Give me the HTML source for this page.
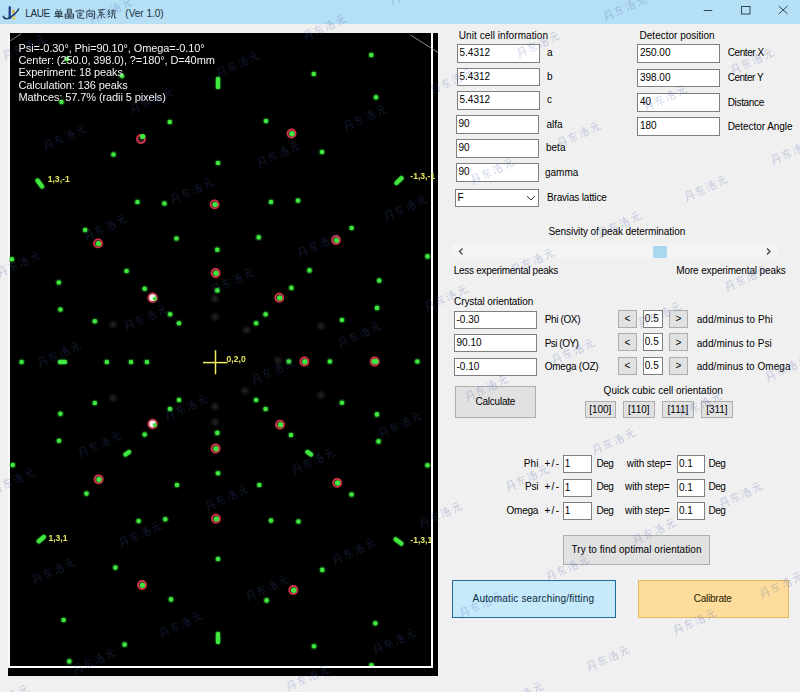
<!DOCTYPE html>
<html><head><meta charset="utf-8"><style>
html,body{margin:0;padding:0;width:800px;height:692px;overflow:hidden;background:#f0f0f0;position:relative;font-family:"Liberation Sans", sans-serif}
.t{position:absolute;white-space:nowrap;font-size:10px;line-height:12px;color:#111}
.tb{position:absolute;box-sizing:border-box;background:#fff;border:1px solid #7f7f7f}
.btn{position:absolute;box-sizing:border-box;background:#e1e1e1;border:1px solid #adadad}
</style></head><body>
<div style="position:absolute;left:0;top:0;width:800px;height:24px;background:#b5dff5"></div>
<svg style="position:absolute;left:0;top:0" width="24" height="24" viewBox="0 0 24 24">
<path d="M9.8 6.3 L9.6 19" stroke="#1c3c86" stroke-width="2.2" fill="none"/>
<path d="M3.3 15.8 C3.5 19.8 8.5 19.2 11.5 16.6 C14 14.6 17.5 12 18.8 8.4" stroke="#1a3a6a" stroke-width="1.6" fill="none"/>
<ellipse cx="13.3" cy="11.6" rx="1.3" ry="2.1" fill="#e0a838"/>
<circle cx="14" cy="17.9" r="1.6" fill="#e0cc50"/>
</svg>
<div class="t" style="left:25.3px;top:8.30px;font-size:10px;color:#22303c;letter-spacing:-0.4px">LAUE</div>
<svg style="position:absolute;left:0;top:0" width="200" height="24"><path transform="translate(54.2,9.2)" d="M2.5 0L3.5 1.5M6.5 0L5.5 1.5M1.5 2.5H7.5V6H1.5ZM1.5 4.25H7.5M4.5 2.5V9.2M0 7.3H9" fill="none" stroke="#2d3d4d" stroke-width="0.95"/><path transform="translate(64.85000000000001,9.2)" d="M2.5 0H6.5V3.8H2.5ZM2.5 1.9H6.5M0.3 4.8H4V9H0.3ZM0.3 6.9H4M5 4.8H8.7V9H5ZM5 6.9H8.7" fill="none" stroke="#2d3d4d" stroke-width="0.95"/><path transform="translate(75.5,9.2)" d="M4.5 0V1.2M0.7 3V1.6H8.3V3M2 3.9H7M4.5 3.9V8.2M4.5 6H7M2.2 5.2V8.6Q5 9.2 9 9.1" fill="none" stroke="#2d3d4d" stroke-width="0.95"/><path transform="translate(86.15,9.2)" d="M3.6 0L2.6 1.6M0.7 9.2V1.9H8.3V9.2L7.2 9M2.8 4.2H6.2V7.2H2.8Z" fill="none" stroke="#2d3d4d" stroke-width="0.95"/><path transform="translate(96.80000000000001,9.2)" d="M1 0.8L8 0.2M4.6 0.6L2.2 3.2L5.8 3.2L2 6L7.6 5.4M4.6 5.8V9.2M2.4 7.2L0.6 8.8M6.6 7.2L8.6 8.8" fill="none" stroke="#2d3d4d" stroke-width="0.95"/><path transform="translate(107.45,9.2)" d="M2 0L0.4 2.6H2.6L0.4 5.2L3 4.8M0.5 8L3.2 6.8M6 0V0.8M3.6 1.6H8.8M5.8 1.6L4.2 4.1L8.2 3.7M5.2 4.6L4 9.2M7 4.6V8.6H9" fill="none" stroke="#2d3d4d" stroke-width="0.95"/></svg>
<div class="t" style="left:125.3px;top:8.30px;font-size:10px;color:#22303c;">(Ver 1.0)</div>
<svg style="position:absolute;left:690px;top:0" width="110" height="24" stroke="#2c4a5a" stroke-width="1" fill="none">
<line x1="13.7" y1="10.5" x2="22.3" y2="10.5"/>
<rect x="51.5" y="6.5" width="8.5" height="7.5"/>
<line x1="88.7" y1="6" x2="97.6" y2="14"/><line x1="97.6" y1="6" x2="88.7" y2="14"/>
</svg>
<div style="position:absolute;left:8px;top:33.4px;width:430px;height:642.6px;background:#000"></div>
<div style="position:absolute;left:431px;top:33px;width:1.6px;height:635px;background:#fff"></div>
<div style="position:absolute;left:9px;top:666px;width:423.6px;height:2.2px;background:#fff"></div>
<div style="position:absolute;left:8px;top:33px;width:1.6px;height:635px;background:#f8f8f8"></div>
<svg style="position:absolute;left:0;top:0" width="440" height="680" viewBox="0 0 440 680"><clipPath id="cp"><rect x="9.6" y="33" width="421.4" height="633"/></clipPath><g clip-path="url(#cp)"><defs><filter id="bl" x="-50%" y="-50%" width="200%" height="200%"><feGaussianBlur stdDeviation="0.55"/></filter><filter id="bl2" x="-50%" y="-50%" width="200%" height="200%"><feGaussianBlur stdDeviation="1.6"/></filter></defs>
<g filter="url(#bl2)" fill="#222222">
<circle cx="215" cy="298.7" r="3.2"/>
<circle cx="215" cy="317" r="3.2"/>
<circle cx="246.6" cy="330" r="3.2"/>
<circle cx="278" cy="360.5" r="3.2"/>
<circle cx="245" cy="390.7" r="3.2"/>
<circle cx="215" cy="406.5" r="3.2"/>
<circle cx="215" cy="422" r="3.2"/>
<circle cx="113" cy="324.6" r="3.2"/>
<circle cx="113" cy="398" r="3.2"/>
<circle cx="321" cy="326" r="3.2"/>
<circle cx="321" cy="395" r="3.2"/>
</g>
<g filter="url(#bl)">
<circle cx="122" cy="76" r="3.6" fill="#20a020" opacity="0.35"/>
<circle cx="61.5" cy="102" r="3.6" fill="#20a020" opacity="0.35"/>
<circle cx="66.9" cy="59.1" r="3.6" fill="#20a020" opacity="0.35"/>
<circle cx="169.8" cy="122" r="3.6" fill="#20a020" opacity="0.35"/>
<circle cx="266" cy="121" r="3.6" fill="#20a020" opacity="0.35"/>
<circle cx="113.5" cy="154.5" r="3.6" fill="#20a020" opacity="0.35"/>
<circle cx="218" cy="163" r="3.6" fill="#20a020" opacity="0.35"/>
<circle cx="322" cy="152" r="3.6" fill="#20a020" opacity="0.35"/>
<circle cx="371.3" cy="55" r="3.6" fill="#20a020" opacity="0.35"/>
<circle cx="313.8" cy="74" r="3.6" fill="#20a020" opacity="0.35"/>
<circle cx="376" cy="97.3" r="3.6" fill="#20a020" opacity="0.35"/>
<circle cx="137.4" cy="202" r="3.6" fill="#20a020" opacity="0.35"/>
<circle cx="164.4" cy="203.5" r="3.6" fill="#20a020" opacity="0.35"/>
<circle cx="271" cy="202" r="3.6" fill="#20a020" opacity="0.35"/>
<circle cx="298" cy="200.6" r="3.6" fill="#20a020" opacity="0.35"/>
<circle cx="85.2" cy="230" r="3.6" fill="#20a020" opacity="0.35"/>
<circle cx="176.5" cy="238.5" r="3.6" fill="#20a020" opacity="0.35"/>
<circle cx="258.7" cy="237.4" r="3.6" fill="#20a020" opacity="0.35"/>
<circle cx="351.6" cy="228" r="3.6" fill="#20a020" opacity="0.35"/>
<circle cx="11.8" cy="259.3" r="3.6" fill="#20a020" opacity="0.35"/>
<circle cx="217.3" cy="249.7" r="3.6" fill="#20a020" opacity="0.35"/>
<circle cx="427.5" cy="256.4" r="3.6" fill="#20a020" opacity="0.35"/>
<circle cx="126.6" cy="271" r="3.6" fill="#20a020" opacity="0.35"/>
<circle cx="309.5" cy="270.4" r="3.6" fill="#20a020" opacity="0.35"/>
<circle cx="58.8" cy="282.5" r="3.6" fill="#20a020" opacity="0.35"/>
<circle cx="379.2" cy="280.6" r="3.6" fill="#20a020" opacity="0.35"/>
<circle cx="144.7" cy="288.8" r="3.6" fill="#20a020" opacity="0.35"/>
<circle cx="217.3" cy="290.4" r="3.6" fill="#20a020" opacity="0.35"/>
<circle cx="291.4" cy="287.9" r="3.6" fill="#20a020" opacity="0.35"/>
<circle cx="60.4" cy="309.5" r="3.6" fill="#20a020" opacity="0.35"/>
<circle cx="377" cy="307.9" r="3.6" fill="#20a020" opacity="0.35"/>
<circle cx="94.8" cy="321.3" r="3.6" fill="#20a020" opacity="0.35"/>
<circle cx="342" cy="320" r="3.6" fill="#20a020" opacity="0.35"/>
<circle cx="170.1" cy="314.3" r="3.6" fill="#20a020" opacity="0.35"/>
<circle cx="179" cy="323.2" r="3.6" fill="#20a020" opacity="0.35"/>
<circle cx="265.6" cy="314.3" r="3.6" fill="#20a020" opacity="0.35"/>
<circle cx="256.1" cy="323.2" r="3.6" fill="#20a020" opacity="0.35"/>
<circle cx="21.6" cy="362" r="3.6" fill="#20a020" opacity="0.35"/>
<circle cx="106.8" cy="362" r="3.6" fill="#20a020" opacity="0.35"/>
<circle cx="131" cy="362" r="3.6" fill="#20a020" opacity="0.35"/>
<circle cx="146.9" cy="362" r="3.6" fill="#20a020" opacity="0.35"/>
<circle cx="288.9" cy="361.5" r="3.6" fill="#20a020" opacity="0.35"/>
<circle cx="329.9" cy="361.5" r="3.6" fill="#20a020" opacity="0.35"/>
<circle cx="417.3" cy="361.5" r="3.6" fill="#20a020" opacity="0.35"/>
<circle cx="94.8" cy="403" r="3.6" fill="#20a020" opacity="0.35"/>
<circle cx="179" cy="400" r="3.6" fill="#20a020" opacity="0.35"/>
<circle cx="170" cy="409" r="3.6" fill="#20a020" opacity="0.35"/>
<circle cx="60.4" cy="413.8" r="3.6" fill="#20a020" opacity="0.35"/>
<circle cx="144.7" cy="434.5" r="3.6" fill="#20a020" opacity="0.35"/>
<circle cx="59" cy="440.8" r="3.6" fill="#20a020" opacity="0.35"/>
<circle cx="217.3" cy="432.9" r="3.6" fill="#20a020" opacity="0.35"/>
<circle cx="256.1" cy="400" r="3.6" fill="#20a020" opacity="0.35"/>
<circle cx="265.6" cy="409" r="3.6" fill="#20a020" opacity="0.35"/>
<circle cx="342" cy="402.7" r="3.6" fill="#20a020" opacity="0.35"/>
<circle cx="377" cy="414.4" r="3.6" fill="#20a020" opacity="0.35"/>
<circle cx="291" cy="435" r="3.6" fill="#20a020" opacity="0.35"/>
<circle cx="378.5" cy="441.4" r="3.6" fill="#20a020" opacity="0.35"/>
<circle cx="12.7" cy="465" r="3.6" fill="#20a020" opacity="0.35"/>
<circle cx="86.5" cy="493.6" r="3.6" fill="#20a020" opacity="0.35"/>
<circle cx="177" cy="485" r="3.6" fill="#20a020" opacity="0.35"/>
<circle cx="218" cy="473.2" r="3.6" fill="#20a020" opacity="0.35"/>
<circle cx="138.6" cy="521" r="3.6" fill="#20a020" opacity="0.35"/>
<circle cx="165.3" cy="519.3" r="3.6" fill="#20a020" opacity="0.35"/>
<circle cx="218" cy="559" r="3.6" fill="#20a020" opacity="0.35"/>
<circle cx="115.4" cy="567.6" r="3.6" fill="#20a020" opacity="0.35"/>
<circle cx="171" cy="599.4" r="3.6" fill="#20a020" opacity="0.35"/>
<circle cx="63.6" cy="620" r="3.6" fill="#20a020" opacity="0.35"/>
<circle cx="124.6" cy="644.6" r="3.6" fill="#20a020" opacity="0.35"/>
<circle cx="69.3" cy="661.4" r="3.6" fill="#20a020" opacity="0.35"/>
<circle cx="427.5" cy="465.3" r="3.6" fill="#20a020" opacity="0.35"/>
<circle cx="259.3" cy="485" r="3.6" fill="#20a020" opacity="0.35"/>
<circle cx="351.5" cy="494.5" r="3.6" fill="#20a020" opacity="0.35"/>
<circle cx="271" cy="520.6" r="3.6" fill="#20a020" opacity="0.35"/>
<circle cx="298.4" cy="521.5" r="3.6" fill="#20a020" opacity="0.35"/>
<circle cx="322.2" cy="569.9" r="3.6" fill="#20a020" opacity="0.35"/>
<circle cx="266.6" cy="600.4" r="3.6" fill="#20a020" opacity="0.35"/>
<circle cx="375.3" cy="623.3" r="3.6" fill="#20a020" opacity="0.35"/>
<circle cx="314" cy="646.2" r="3.6" fill="#20a020" opacity="0.35"/>
<circle cx="371.5" cy="665.3" r="3.6" fill="#20a020" opacity="0.35"/>
<circle cx="122" cy="76" r="2.3" fill="#40e840"/>
<circle cx="61.5" cy="102" r="2.3" fill="#40e840"/>
<circle cx="66.9" cy="59.1" r="2.3" fill="#40e840"/>
<circle cx="169.8" cy="122" r="2.3" fill="#40e840"/>
<circle cx="266" cy="121" r="2.3" fill="#40e840"/>
<circle cx="141" cy="139" r="5.2" fill="#c02838" opacity="0.3"/>
<circle cx="141" cy="139" r="4.0" fill="#302020" stroke="#d03448" stroke-width="1.8"/>
<circle cx="142.7" cy="136.4" r="2.7" fill="#40e840"/>
<circle cx="291.5" cy="133.5" r="5.2" fill="#c02838" opacity="0.3"/>
<circle cx="291.5" cy="133.5" r="4.0" fill="#302020" stroke="#d03448" stroke-width="1.8"/>
<circle cx="291.9" cy="133.7" r="2.7" fill="#40e840"/>
<circle cx="113.5" cy="154.5" r="2.3" fill="#40e840"/>
<circle cx="218" cy="163" r="2.3" fill="#40e840"/>
<circle cx="322" cy="152" r="2.3" fill="#40e840"/>
<circle cx="371.3" cy="55" r="2.3" fill="#40e840"/>
<circle cx="313.8" cy="74" r="2.3" fill="#40e840"/>
<circle cx="376" cy="97.3" r="2.3" fill="#40e840"/>
<circle cx="137.4" cy="202" r="2.3" fill="#40e840"/>
<circle cx="164.4" cy="203.5" r="2.3" fill="#40e840"/>
<circle cx="214.6" cy="204.4" r="5.2" fill="#c02838" opacity="0.3"/>
<circle cx="214.6" cy="204.4" r="4.0" fill="#302020" stroke="#d03448" stroke-width="1.8"/>
<circle cx="215.0" cy="204.6" r="2.7" fill="#40e840"/>
<circle cx="271" cy="202" r="2.3" fill="#40e840"/>
<circle cx="298" cy="200.6" r="2.3" fill="#40e840"/>
<circle cx="85.2" cy="230" r="2.3" fill="#40e840"/>
<circle cx="176.5" cy="238.5" r="2.3" fill="#40e840"/>
<circle cx="258.7" cy="237.4" r="2.3" fill="#40e840"/>
<circle cx="351.6" cy="228" r="2.3" fill="#40e840"/>
<circle cx="98" cy="243.4" r="5.2" fill="#c02838" opacity="0.3"/>
<circle cx="98" cy="243.4" r="4.0" fill="#302020" stroke="#d03448" stroke-width="1.8"/>
<circle cx="98.4" cy="243.6" r="2.7" fill="#40e840"/>
<circle cx="336" cy="240" r="5.2" fill="#c02838" opacity="0.3"/>
<circle cx="336" cy="240" r="4.0" fill="#302020" stroke="#d03448" stroke-width="1.8"/>
<circle cx="336.4" cy="240.2" r="2.7" fill="#40e840"/>
<circle cx="11.8" cy="259.3" r="2.3" fill="#40e840"/>
<circle cx="217.3" cy="249.7" r="2.3" fill="#40e840"/>
<circle cx="427.5" cy="256.4" r="2.3" fill="#40e840"/>
<circle cx="126.6" cy="271" r="2.3" fill="#40e840"/>
<circle cx="309.5" cy="270.4" r="2.3" fill="#40e840"/>
<circle cx="215.6" cy="273" r="5.2" fill="#c02838" opacity="0.3"/>
<circle cx="215.6" cy="273" r="4.0" fill="#302020" stroke="#d03448" stroke-width="1.8"/>
<circle cx="216.0" cy="273.2" r="2.7" fill="#40e840"/>
<circle cx="58.8" cy="282.5" r="2.3" fill="#40e840"/>
<circle cx="379.2" cy="280.6" r="2.3" fill="#40e840"/>
<circle cx="144.7" cy="288.8" r="2.3" fill="#40e840"/>
<circle cx="152.6" cy="297.7" r="5.4" fill="#b03040"/>
<circle cx="152.6" cy="297.7" r="3.4" fill="#fff0f0"/>
<circle cx="154.79999999999998" cy="298.7" r="2.1" fill="#40e040"/>
<circle cx="217.3" cy="290.4" r="2.3" fill="#40e840"/>
<circle cx="291.4" cy="287.9" r="2.3" fill="#40e840"/>
<circle cx="279.3" cy="297.7" r="5.2" fill="#c02838" opacity="0.3"/>
<circle cx="279.3" cy="297.7" r="4.0" fill="#302020" stroke="#d03448" stroke-width="1.8"/>
<circle cx="279.7" cy="297.9" r="2.7" fill="#40e840"/>
<circle cx="60.4" cy="309.5" r="2.3" fill="#40e840"/>
<circle cx="377" cy="307.9" r="2.3" fill="#40e840"/>
<circle cx="94.8" cy="321.3" r="2.3" fill="#40e840"/>
<circle cx="342" cy="320" r="2.3" fill="#40e840"/>
<circle cx="170.1" cy="314.3" r="2.3" fill="#40e840"/>
<circle cx="179" cy="323.2" r="2.3" fill="#40e840"/>
<circle cx="265.6" cy="314.3" r="2.3" fill="#40e840"/>
<circle cx="256.1" cy="323.2" r="2.3" fill="#40e840"/>
<circle cx="21.6" cy="362" r="2.3" fill="#40e840"/>
<circle cx="106.8" cy="362" r="2.3" fill="#40e840"/>
<circle cx="131" cy="362" r="2.3" fill="#40e840"/>
<circle cx="146.9" cy="362" r="2.3" fill="#40e840"/>
<circle cx="288.9" cy="361.5" r="2.3" fill="#40e840"/>
<circle cx="304.4" cy="361.5" r="5.2" fill="#c02838" opacity="0.3"/>
<circle cx="304.4" cy="361.5" r="4.0" fill="#302020" stroke="#d03448" stroke-width="1.8"/>
<circle cx="304.79999999999995" cy="361.7" r="2.7" fill="#40e840"/>
<circle cx="329.9" cy="361.5" r="2.3" fill="#40e840"/>
<circle cx="374.7" cy="361.5" r="5.2" fill="#c02838" opacity="0.3"/>
<circle cx="374.7" cy="361.5" r="4.0" fill="#302020" stroke="#d03448" stroke-width="1.8"/>
<ellipse cx="375.09999999999997" cy="361.5" rx="3.6" ry="2.7" fill="#40e840"/>
<circle cx="417.3" cy="361.5" r="2.3" fill="#40e840"/>
<circle cx="94.8" cy="403" r="2.3" fill="#40e840"/>
<circle cx="179" cy="400" r="2.3" fill="#40e840"/>
<circle cx="170" cy="409" r="2.3" fill="#40e840"/>
<circle cx="60.4" cy="413.8" r="2.3" fill="#40e840"/>
<circle cx="152.6" cy="424" r="5.4" fill="#b03040"/>
<circle cx="152.6" cy="424" r="3.4" fill="#fff0f0"/>
<circle cx="154.79999999999998" cy="425" r="2.1" fill="#40e040"/>
<circle cx="144.7" cy="434.5" r="2.3" fill="#40e840"/>
<circle cx="59" cy="440.8" r="2.3" fill="#40e840"/>
<circle cx="217.3" cy="432.9" r="2.3" fill="#40e840"/>
<circle cx="215.6" cy="448.5" r="5.2" fill="#c02838" opacity="0.3"/>
<circle cx="215.6" cy="448.5" r="4.0" fill="#302020" stroke="#d03448" stroke-width="1.8"/>
<circle cx="216.0" cy="448.7" r="2.7" fill="#40e840"/>
<circle cx="256.1" cy="400" r="2.3" fill="#40e840"/>
<circle cx="265.6" cy="409" r="2.3" fill="#40e840"/>
<circle cx="342" cy="402.7" r="2.3" fill="#40e840"/>
<circle cx="280" cy="424.6" r="5.2" fill="#c02838" opacity="0.3"/>
<circle cx="280" cy="424.6" r="4.0" fill="#302020" stroke="#d03448" stroke-width="1.8"/>
<circle cx="280.4" cy="424.8" r="2.7" fill="#40e840"/>
<circle cx="377" cy="414.4" r="2.3" fill="#40e840"/>
<circle cx="291" cy="435" r="2.3" fill="#40e840"/>
<circle cx="378.5" cy="441.4" r="2.3" fill="#40e840"/>
<circle cx="12.7" cy="465" r="2.3" fill="#40e840"/>
<circle cx="98.6" cy="479.3" r="5.2" fill="#c02838" opacity="0.3"/>
<circle cx="98.6" cy="479.3" r="4.0" fill="#302020" stroke="#d03448" stroke-width="1.8"/>
<circle cx="99.0" cy="479.5" r="2.7" fill="#40e840"/>
<circle cx="86.5" cy="493.6" r="2.3" fill="#40e840"/>
<circle cx="177" cy="485" r="2.3" fill="#40e840"/>
<circle cx="218" cy="473.2" r="2.3" fill="#40e840"/>
<circle cx="138.6" cy="521" r="2.3" fill="#40e840"/>
<circle cx="165.3" cy="519.3" r="2.3" fill="#40e840"/>
<circle cx="216" cy="518.7" r="5.2" fill="#c02838" opacity="0.3"/>
<circle cx="216" cy="518.7" r="4.0" fill="#302020" stroke="#d03448" stroke-width="1.8"/>
<circle cx="216.4" cy="518.9000000000001" r="2.7" fill="#40e840"/>
<circle cx="218" cy="559" r="2.3" fill="#40e840"/>
<circle cx="115.4" cy="567.6" r="2.3" fill="#40e840"/>
<circle cx="142" cy="585" r="5.2" fill="#c02838" opacity="0.3"/>
<circle cx="142" cy="585" r="4.0" fill="#302020" stroke="#d03448" stroke-width="1.8"/>
<circle cx="142.4" cy="585.2" r="2.7" fill="#40e840"/>
<circle cx="171" cy="599.4" r="2.3" fill="#40e840"/>
<circle cx="63.6" cy="620" r="2.3" fill="#40e840"/>
<circle cx="124.6" cy="644.6" r="2.3" fill="#40e840"/>
<circle cx="69.3" cy="661.4" r="2.3" fill="#40e840"/>
<circle cx="427.5" cy="465.3" r="2.3" fill="#40e840"/>
<circle cx="259.3" cy="485" r="2.3" fill="#40e840"/>
<circle cx="337.2" cy="482.8" r="5.2" fill="#c02838" opacity="0.3"/>
<circle cx="337.2" cy="482.8" r="4.0" fill="#302020" stroke="#d03448" stroke-width="1.8"/>
<circle cx="337.59999999999997" cy="483.0" r="2.7" fill="#40e840"/>
<circle cx="351.5" cy="494.5" r="2.3" fill="#40e840"/>
<circle cx="271" cy="520.6" r="2.3" fill="#40e840"/>
<circle cx="298.4" cy="521.5" r="2.3" fill="#40e840"/>
<circle cx="322.2" cy="569.9" r="2.3" fill="#40e840"/>
<circle cx="293.3" cy="590" r="5.2" fill="#c02838" opacity="0.3"/>
<circle cx="293.3" cy="590" r="4.0" fill="#302020" stroke="#d03448" stroke-width="1.8"/>
<circle cx="293.7" cy="590.2" r="2.7" fill="#40e840"/>
<circle cx="266.6" cy="600.4" r="2.3" fill="#40e840"/>
<circle cx="375.3" cy="623.3" r="2.3" fill="#40e840"/>
<circle cx="314" cy="646.2" r="2.3" fill="#40e840"/>
<circle cx="371.5" cy="665.3" r="2.3" fill="#40e840"/>
<line x1="218" y1="79" x2="218" y2="87" stroke="#20a020" stroke-opacity="0.35" stroke-width="6.5" stroke-linecap="round"/>
<line x1="218" y1="79" x2="218" y2="87" stroke="#40e840" stroke-width="4.4" stroke-linecap="round"/>
<line x1="218" y1="634" x2="218" y2="642" stroke="#20a020" stroke-opacity="0.35" stroke-width="6.5" stroke-linecap="round"/>
<line x1="218" y1="634" x2="218" y2="642" stroke="#40e840" stroke-width="4.4" stroke-linecap="round"/>
<line x1="37.6" y1="180.6" x2="42" y2="186.5" stroke="#20a020" stroke-opacity="0.35" stroke-width="6.5" stroke-linecap="round"/>
<line x1="37.6" y1="180.6" x2="42" y2="186.5" stroke="#40e840" stroke-width="4.4" stroke-linecap="round"/>
<line x1="396.5" y1="183" x2="401.5" y2="178.2" stroke="#20a020" stroke-opacity="0.35" stroke-width="6.5" stroke-linecap="round"/>
<line x1="396.5" y1="183" x2="401.5" y2="178.2" stroke="#40e840" stroke-width="4.4" stroke-linecap="round"/>
<line x1="43.8" y1="537" x2="38.8" y2="541.2" stroke="#20a020" stroke-opacity="0.35" stroke-width="6.5" stroke-linecap="round"/>
<line x1="43.8" y1="537" x2="38.8" y2="541.2" stroke="#40e840" stroke-width="4.4" stroke-linecap="round"/>
<line x1="395.8" y1="539.4" x2="401.3" y2="543.6" stroke="#20a020" stroke-opacity="0.35" stroke-width="6.5" stroke-linecap="round"/>
<line x1="395.8" y1="539.4" x2="401.3" y2="543.6" stroke="#40e840" stroke-width="4.4" stroke-linecap="round"/>
<line x1="60" y1="362" x2="65" y2="362" stroke="#20a020" stroke-opacity="0.35" stroke-width="6.5" stroke-linecap="round"/>
<line x1="60" y1="362" x2="65" y2="362" stroke="#40e840" stroke-width="4.4" stroke-linecap="round"/>
<line x1="125.5" y1="454.5" x2="129" y2="452" stroke="#20a020" stroke-opacity="0.35" stroke-width="6.5" stroke-linecap="round"/>
<line x1="125.5" y1="454.5" x2="129" y2="452" stroke="#40e840" stroke-width="4.4" stroke-linecap="round"/>
<line x1="307.5" y1="452" x2="311" y2="454.5" stroke="#20a020" stroke-opacity="0.35" stroke-width="6.5" stroke-linecap="round"/>
<line x1="307.5" y1="452" x2="311" y2="454.5" stroke="#40e840" stroke-width="4.4" stroke-linecap="round"/>
</g>
<g stroke="#eeee60" stroke-width="1.5"><line x1="203" y1="362.6" x2="227.5" y2="362.6"/><line x1="215.5" y1="350.2" x2="215.5" y2="374.3"/></g>
<text x="226.6" y="362" fill="#e6e660" font-family="Liberation Sans" font-weight="bold" font-size="8.6">0,2,0</text>
<text x="47.7" y="181.9" fill="#e6e660" font-family="Liberation Sans" font-weight="bold" font-size="8.6">1,3,-1</text>
<text x="48.4" y="541.2" fill="#e6e660" font-family="Liberation Sans" font-weight="bold" font-size="8.6">1,3,1</text>
<text x="410.3" y="542.6" fill="#e6e660" font-family="Liberation Sans" font-weight="bold" font-size="8.6">-1,3,1</text></g><line x1="9.8" y1="41" x2="21" y2="34" stroke="#9a9a9a" stroke-width="0.8"/><line x1="410.5" y1="35" x2="438" y2="52.5" stroke="#b0b0b0" stroke-width="0.8"/><text x="410.3" y="178.9" fill="#e6e660" font-family="Liberation Sans" font-weight="bold" font-size="8.6">-1,3,-1</text></svg>
<div class="t" style="left:18.5px;top:41.67px;font-size:11px;color:#f4f4f4;letter-spacing:-0.1px">Psi=-0.30°, Phi=90.10°, Omega=-0.10°</div>
<div class="t" style="left:18.5px;top:54.02px;font-size:11px;color:#f4f4f4;letter-spacing:-0.1px">Center: (250.0, 398.0), ?=180°, D=40mm</div>
<div class="t" style="left:18.5px;top:66.37px;font-size:11px;color:#f4f4f4;letter-spacing:-0.1px">Experiment: 18 peaks</div>
<div class="t" style="left:18.5px;top:78.72px;font-size:11px;color:#f4f4f4;letter-spacing:-0.1px">Calculation: 136 peaks</div>
<div class="t" style="left:18.5px;top:91.07px;font-size:11px;color:#f4f4f4;letter-spacing:-0.1px">Mathces: 57.7% (radii 5 pixels)</div>
<div class="t" style="left:458.8px;top:29.50px;font-size:10px;color:#000;letter-spacing:0.069px;">Unit cell information</div>
<div class="t" style="left:639.6px;top:29.50px;font-size:10px;color:#000;letter-spacing:-0.003px;">Detector position</div>
<div class="tb" style="left:457px;top:44px;width:82.5px;height:18.5px"></div><div class="t" style="left:459.5px;top:47.00px;font-size:10px;color:#000;">5.4312</div>
<div class="t" style="left:547px;top:47.20px;font-size:10px;color:#000;">a</div>
<div class="tb" style="left:457px;top:67.5px;width:82.5px;height:18.5px"></div><div class="t" style="left:459.5px;top:70.50px;font-size:10px;color:#000;">5.4312</div>
<div class="t" style="left:547px;top:70.70px;font-size:10px;color:#000;">b</div>
<div class="tb" style="left:457px;top:91px;width:82.5px;height:18.5px"></div><div class="t" style="left:459.5px;top:94.00px;font-size:10px;color:#000;">5.4312</div>
<div class="t" style="left:547px;top:94.20px;font-size:10px;color:#000;">c</div>
<div class="tb" style="left:456px;top:115.3px;width:82.5px;height:18.5px"></div><div class="t" style="left:458.5px;top:118.30px;font-size:10px;color:#000;">90</div>
<div class="t" style="left:546.4px;top:118.50px;font-size:10px;color:#000;">alfa</div>
<div class="tb" style="left:456px;top:139.2px;width:82.5px;height:18.5px"></div><div class="t" style="left:458.5px;top:142.20px;font-size:10px;color:#000;">90</div>
<div class="t" style="left:546px;top:142.40px;font-size:10px;color:#000;">beta</div>
<div class="tb" style="left:456px;top:163.3px;width:82.5px;height:18.5px"></div><div class="t" style="left:458.5px;top:166.30px;font-size:10px;color:#000;">90</div>
<div class="t" style="left:545px;top:166.50px;font-size:10px;color:#000;">gamma</div>
<div class="tb" style="left:454.5px;top:188.5px;width:84px;height:18.5px"></div><div class="t" style="left:457.5px;top:191.50px;font-size:10px;color:#000;">F</div>
<svg style="position:absolute;left:525.5px;top:194px" width="10" height="8"><polyline points="1,2 5,6 9,2" fill="none" stroke="#333" stroke-width="1"/></svg>
<div class="t" style="left:547px;top:191.70px;font-size:10px;color:#000;letter-spacing:-0.175px;">Bravias lattice</div>
<div class="tb" style="left:637.4px;top:44.1px;width:82.3px;height:18.7px"></div><div class="t" style="left:639.9px;top:47.10px;font-size:10px;color:#000;">250.00</div>
<div class="t" style="left:727.7px;top:47.40px;font-size:10px;color:#000;letter-spacing:-0.410px;">Center X</div>
<div class="tb" style="left:637.4px;top:68.6px;width:82.3px;height:18.7px"></div><div class="t" style="left:639.9px;top:71.60px;font-size:10px;color:#000;">398.00</div>
<div class="t" style="left:727.7px;top:71.90px;font-size:10px;color:#000;letter-spacing:-0.471px;">Center Y</div>
<div class="tb" style="left:637.4px;top:93.4px;width:82.3px;height:18.7px"></div><div class="t" style="left:639.9px;top:96.40px;font-size:10px;color:#000;">40</div>
<div class="t" style="left:727.7px;top:96.70px;font-size:10px;color:#000;letter-spacing:-0.329px;">Distance</div>
<div class="tb" style="left:637.4px;top:117.4px;width:82.3px;height:18.7px"></div><div class="t" style="left:639.9px;top:120.40px;font-size:10px;color:#000;">180</div>
<div class="t" style="left:727.7px;top:120.70px;font-size:10px;color:#000;letter-spacing:-0.055px;">Detector Angle</div>
<div class="t" style="left:548.5px;top:225.50px;font-size:10px;color:#000;letter-spacing:-0.074px;">Sensivity of peak determination</div>
<div style="position:absolute;left:452px;top:244.3px;width:326px;height:13.5px;background:#f4f4f4"></div>
<div style="position:absolute;left:653px;top:246px;width:13.8px;height:11.75px;background:#a8d8f0"></div>
<svg style="position:absolute;left:452px;top:244px" width="326" height="14"><polyline points="10.5,4.5 7.5,7.5 10.5,10.5" fill="none" stroke="#444" stroke-width="1.3"/><polyline points="315,4.5 318,7.5 315,10.5" fill="none" stroke="#444" stroke-width="1.3"/></svg>
<div class="t" style="left:453.7px;top:265.10px;font-size:10px;color:#000;letter-spacing:-0.278px;">Less experimental peaks</div>
<div class="t" style="left:676.25px;top:264.90px;font-size:10px;color:#000;letter-spacing:-0.126px;">More experimental peaks</div>
<div class="t" style="left:454px;top:296.20px;font-size:10px;color:#000;letter-spacing:-0.077px;">Crystal orientation</div>
<div class="tb" style="left:454px;top:311.25px;width:82.8px;height:18px"></div><div class="t" style="left:456.5px;top:314.25px;font-size:10px;color:#000;">-0.30</div>
<div class="t" style="left:544.7px;top:314.45px;font-size:10px;color:#000;letter-spacing:-0.363px;">Phi (OX)</div>
<div class="btn" style="left:618.3px;top:310px;width:18.3px;height:18px"></div><div class="t" style="left:477.44999999999993px;width:300px;text-align:center;top:313.30px;font-size:10px;color:#000">&lt;</div>
<div class="tb" style="left:642.8px;top:309.5px;width:20.6px;height:18.5px"></div><div class="t" style="left:644.8px;top:312.50px;font-size:10px;color:#000;">0.5</div>
<div class="btn" style="left:668.9px;top:310px;width:19px;height:18px"></div><div class="t" style="left:528.4px;width:300px;text-align:center;top:313.30px;font-size:10px;color:#000">&gt;</div>
<div class="t" style="left:696.7px;top:314.45px;font-size:10px;color:#000;letter-spacing:0.100px;">add/minus to Phi</div>
<div class="tb" style="left:454px;top:334.4px;width:82.8px;height:18px"></div><div class="t" style="left:456.5px;top:337.40px;font-size:10px;color:#000;">90.10</div>
<div class="t" style="left:544.7px;top:337.60px;font-size:10px;color:#000;letter-spacing:-0.512px;">Psi (OY)</div>
<div class="btn" style="left:618.3px;top:333.25px;width:18.3px;height:18px"></div><div class="t" style="left:477.44999999999993px;width:300px;text-align:center;top:336.55px;font-size:10px;color:#000">&lt;</div>
<div class="tb" style="left:642.8px;top:332.75px;width:20.6px;height:18.5px"></div><div class="t" style="left:644.8px;top:335.75px;font-size:10px;color:#000;">0.5</div>
<div class="btn" style="left:668.9px;top:333.25px;width:19px;height:18px"></div><div class="t" style="left:528.4px;width:300px;text-align:center;top:336.55px;font-size:10px;color:#000">&gt;</div>
<div class="t" style="left:696.7px;top:337.70px;font-size:10px;color:#000;letter-spacing:0.071px;">add/minus to Psi</div>
<div class="tb" style="left:454px;top:358px;width:82.8px;height:18px"></div><div class="t" style="left:456.5px;top:361.00px;font-size:10px;color:#000;">-0.10</div>
<div class="t" style="left:544.7px;top:361.20px;font-size:10px;color:#000;letter-spacing:-0.236px;">Omega (OZ)</div>
<div class="btn" style="left:618.3px;top:357px;width:18.3px;height:18px"></div><div class="t" style="left:477.44999999999993px;width:300px;text-align:center;top:360.30px;font-size:10px;color:#000">&lt;</div>
<div class="tb" style="left:642.8px;top:356.5px;width:20.6px;height:18.5px"></div><div class="t" style="left:644.8px;top:359.50px;font-size:10px;color:#000;">0.5</div>
<div class="btn" style="left:668.9px;top:357px;width:19px;height:18px"></div><div class="t" style="left:528.4px;width:300px;text-align:center;top:360.30px;font-size:10px;color:#000">&gt;</div>
<div class="t" style="left:696.7px;top:361.45px;font-size:10px;color:#000;letter-spacing:0.057px;">add/minus to Omega</div>
<div class="btn" style="left:455px;top:386px;width:81px;height:31.7px"></div><div class="t" style="left:345.5px;width:300px;text-align:center;top:396.45px;font-size:10px;color:#000"></div>
<div class="t" style="left:475.4px;top:396.45px;font-size:10px;color:#000;letter-spacing:-0.213px;">Calculate</div>
<div class="t" style="left:603.6px;top:385.20px;font-size:10px;color:#000;letter-spacing:0.009px;">Quick cubic cell orientation</div>
<div class="btn" style="left:584.5px;top:401.1px;width:31.5px;height:16.5px"></div><div class="t" style="left:450.25px;width:300px;text-align:center;top:404.00px;font-size:10px;color:#000">[100]</div>
<div class="btn" style="left:623px;top:401.1px;width:31.6px;height:16.5px"></div><div class="t" style="left:488.79999999999995px;width:300px;text-align:center;top:404.00px;font-size:10px;color:#000">[110]</div>
<div class="btn" style="left:662.25px;top:401.1px;width:31.35px;height:16.5px"></div><div class="t" style="left:527.925px;width:300px;text-align:center;top:404.00px;font-size:10px;color:#000">[111]</div>
<div class="btn" style="left:701px;top:401.1px;width:31.8px;height:16.5px"></div><div class="t" style="left:566.9px;width:300px;text-align:center;top:404.00px;font-size:10px;color:#000">[311]</div>
<div class="t" style="left:523.75px;top:457.50px;font-size:10px;color:#000;letter-spacing:0.098px;">Phi</div>
<div class="t" style="left:544.5px;top:457.50px;font-size:10px;color:#000;letter-spacing:1.273px;">+/-</div>
<div class="tb" style="left:562.7px;top:454.6px;width:29px;height:18px"></div><div class="t" style="left:564.7px;top:457.60px;font-size:10px;color:#000;">1</div>
<div class="t" style="left:596.5px;top:457.50px;font-size:10px;color:#000;letter-spacing:-0.555px;">Deg</div>
<div class="t" style="left:626.75px;top:457.50px;font-size:10px;color:#000;letter-spacing:-0.090px;">with step=</div>
<div class="tb" style="left:677px;top:454.6px;width:28.4px;height:18px"></div><div class="t" style="left:679px;top:457.60px;font-size:10px;color:#000;">0.1</div>
<div class="t" style="left:708.6px;top:457.50px;font-size:10px;color:#000;letter-spacing:-0.555px;">Deg</div>
<div class="t" style="left:525.0px;top:481.40px;font-size:10px;color:#000;letter-spacing:-0.253px;">Psi</div>
<div class="t" style="left:544.5px;top:481.40px;font-size:10px;color:#000;letter-spacing:1.273px;">+/-</div>
<div class="tb" style="left:562.7px;top:478.5px;width:29px;height:18px"></div><div class="t" style="left:564.7px;top:481.50px;font-size:10px;color:#000;">1</div>
<div class="t" style="left:596.5px;top:481.40px;font-size:10px;color:#000;letter-spacing:-0.555px;">Deg</div>
<div class="t" style="left:625px;top:481.40px;font-size:10px;color:#000;letter-spacing:-0.090px;">with step=</div>
<div class="tb" style="left:677px;top:478.5px;width:28.4px;height:18px"></div><div class="t" style="left:679px;top:481.50px;font-size:10px;color:#000;">0.1</div>
<div class="t" style="left:708.6px;top:481.40px;font-size:10px;color:#000;letter-spacing:-0.555px;">Deg</div>
<div class="t" style="left:506.5px;top:505.30px;font-size:10px;color:#000;letter-spacing:-0.224px;">Omega</div>
<div class="t" style="left:544.5px;top:505.30px;font-size:10px;color:#000;letter-spacing:1.273px;">+/-</div>
<div class="tb" style="left:562.7px;top:502.40000000000003px;width:29px;height:18px"></div><div class="t" style="left:564.7px;top:505.40px;font-size:10px;color:#000;">1</div>
<div class="t" style="left:596.5px;top:505.30px;font-size:10px;color:#000;letter-spacing:-0.555px;">Deg</div>
<div class="t" style="left:625px;top:505.30px;font-size:10px;color:#000;letter-spacing:-0.090px;">with step=</div>
<div class="tb" style="left:677px;top:502.40000000000003px;width:28.4px;height:18px"></div><div class="t" style="left:679px;top:505.40px;font-size:10px;color:#000;">0.1</div>
<div class="t" style="left:708.6px;top:505.30px;font-size:10px;color:#000;letter-spacing:-0.555px;">Deg</div>
<div class="btn" style="left:563.4px;top:535.2px;width:146.2px;height:29.8px"></div><div class="t" style="left:486.5px;width:300px;text-align:center;top:544.45px;font-size:10px;color:#000"></div>
<div class="t" style="left:571.5px;top:544.45px;font-size:10px;color:#000;letter-spacing:0.047px;">Try to find optimal orientation</div>
<div style="position:absolute;left:452px;top:579.5px;width:164px;height:38.2px;box-sizing:border-box;background:#c6eafb;border:1.7px solid #1d6c9c"></div>
<div class="t" style="left:472.6px;top:592.70px;font-size:10px;color:#0a2a40;letter-spacing:0.158px;">Automatic searching/fitting</div>
<div style="position:absolute;left:638px;top:579.5px;width:150.75px;height:38.2px;box-sizing:border-box;background:#fddc9c;border:1px solid #e4b660"></div>
<div class="t" style="left:693.8px;top:592.70px;font-size:10px;color:#2a1a00;letter-spacing:-0.254px;">Calibrate</div>
<svg style="position:absolute;left:0;top:0;pointer-events:none" width="800" height="692"><defs><path id="wm" transform="translate(-23,-5)" d="M3 0.5V5Q2.5 8 0.5 9.8M3 0.5H8V9.5L7 9M4.5 2.5L5.5 3.5M1 5.8H9.5M13 2H21M16.5 0Q15 4 14 5H20M17.2 4.5V9.5L16.5 9M15 7L13.5 9M19 7L20.5 9M25 1L26 2M24.5 4L25.5 5M24.5 9.5L26 6.5M28 2L27.5 3.5M28 2H32M30 0V4.5M27 4.5H33.5M28.5 6H32.5V9.5H28.5ZM38.5 1H43.5M37 4H45M40 4Q40 8 37 9.5M42 4V9H45.5V8" fill="none" stroke="rgb(70,90,175)" stroke-opacity="0.22" stroke-width="1.1"/></defs><use href="#wm" transform="translate(-33.3,607.5) rotate(-25)"/><use href="#wm" transform="translate(7.2,697.6) rotate(-25)"/><use href="#wm" transform="translate(-27.7,390.7) rotate(-25)"/><use href="#wm" transform="translate(12.8,480.8) rotate(-25)"/><use href="#wm" transform="translate(53.3,570.9) rotate(-25)"/><use href="#wm" transform="translate(93.8,661.0) rotate(-25)"/><use href="#wm" transform="translate(-22.1,173.9) rotate(-25)"/><use href="#wm" transform="translate(18.4,264.0) rotate(-25)"/><use href="#wm" transform="translate(58.9,354.1) rotate(-25)"/><use href="#wm" transform="translate(99.4,444.2) rotate(-25)"/><use href="#wm" transform="translate(139.9,534.3) rotate(-25)"/><use href="#wm" transform="translate(180.4,624.4) rotate(-25)"/><use href="#wm" transform="translate(220.9,714.5) rotate(-25)"/><use href="#wm" transform="translate(24.0,47.2) rotate(-25)"/><use href="#wm" transform="translate(64.5,137.3) rotate(-25)"/><use href="#wm" transform="translate(105.0,227.4) rotate(-25)"/><use href="#wm" transform="translate(145.5,317.5) rotate(-25)"/><use href="#wm" transform="translate(186.0,407.6) rotate(-25)"/><use href="#wm" transform="translate(226.5,497.7) rotate(-25)"/><use href="#wm" transform="translate(267.0,587.8) rotate(-25)"/><use href="#wm" transform="translate(307.5,677.9) rotate(-25)"/><use href="#wm" transform="translate(110.6,10.6) rotate(-25)"/><use href="#wm" transform="translate(151.1,100.7) rotate(-25)"/><use href="#wm" transform="translate(191.6,190.8) rotate(-25)"/><use href="#wm" transform="translate(232.1,280.9) rotate(-25)"/><use href="#wm" transform="translate(272.6,371.0) rotate(-25)"/><use href="#wm" transform="translate(313.1,461.1) rotate(-25)"/><use href="#wm" transform="translate(353.6,551.2) rotate(-25)"/><use href="#wm" transform="translate(394.1,641.3) rotate(-25)"/><use href="#wm" transform="translate(197.2,-26.0) rotate(-25)"/><use href="#wm" transform="translate(237.7,64.1) rotate(-25)"/><use href="#wm" transform="translate(278.2,154.2) rotate(-25)"/><use href="#wm" transform="translate(318.7,244.3) rotate(-25)"/><use href="#wm" transform="translate(359.2,334.4) rotate(-25)"/><use href="#wm" transform="translate(399.7,424.5) rotate(-25)"/><use href="#wm" transform="translate(440.2,514.6) rotate(-25)"/><use href="#wm" transform="translate(480.7,604.7) rotate(-25)"/><use href="#wm" transform="translate(521.2,694.8) rotate(-25)"/><use href="#wm" transform="translate(324.3,27.5) rotate(-25)"/><use href="#wm" transform="translate(364.8,117.6) rotate(-25)"/><use href="#wm" transform="translate(405.3,207.7) rotate(-25)"/><use href="#wm" transform="translate(445.8,297.8) rotate(-25)"/><use href="#wm" transform="translate(486.3,387.9) rotate(-25)"/><use href="#wm" transform="translate(526.8,478.0) rotate(-25)"/><use href="#wm" transform="translate(567.3,568.1) rotate(-25)"/><use href="#wm" transform="translate(607.8,658.2) rotate(-25)"/><use href="#wm" transform="translate(410.9,-9.1) rotate(-25)"/><use href="#wm" transform="translate(451.4,81.0) rotate(-25)"/><use href="#wm" transform="translate(491.9,171.1) rotate(-25)"/><use href="#wm" transform="translate(532.4,261.2) rotate(-25)"/><use href="#wm" transform="translate(572.9,351.3) rotate(-25)"/><use href="#wm" transform="translate(613.4,441.4) rotate(-25)"/><use href="#wm" transform="translate(653.9,531.5) rotate(-25)"/><use href="#wm" transform="translate(694.4,621.6) rotate(-25)"/><use href="#wm" transform="translate(734.9,711.7) rotate(-25)"/><use href="#wm" transform="translate(538.0,44.4) rotate(-25)"/><use href="#wm" transform="translate(578.5,134.5) rotate(-25)"/><use href="#wm" transform="translate(619.0,224.6) rotate(-25)"/><use href="#wm" transform="translate(659.5,314.7) rotate(-25)"/><use href="#wm" transform="translate(700.0,404.8) rotate(-25)"/><use href="#wm" transform="translate(740.5,494.9) rotate(-25)"/><use href="#wm" transform="translate(781.0,585.0) rotate(-25)"/><use href="#wm" transform="translate(821.5,675.1) rotate(-25)"/><use href="#wm" transform="translate(624.6,7.8) rotate(-25)"/><use href="#wm" transform="translate(665.1,97.9) rotate(-25)"/><use href="#wm" transform="translate(705.6,188.0) rotate(-25)"/><use href="#wm" transform="translate(746.1,278.1) rotate(-25)"/><use href="#wm" transform="translate(786.6,368.2) rotate(-25)"/><use href="#wm" transform="translate(827.1,458.3) rotate(-25)"/><use href="#wm" transform="translate(711.2,-28.8) rotate(-25)"/><use href="#wm" transform="translate(751.7,61.3) rotate(-25)"/><use href="#wm" transform="translate(792.2,151.4) rotate(-25)"/><use href="#wm" transform="translate(832.7,241.5) rotate(-25)"/><use href="#wm" transform="translate(838.3,24.7) rotate(-25)"/></svg>
</body></html>
